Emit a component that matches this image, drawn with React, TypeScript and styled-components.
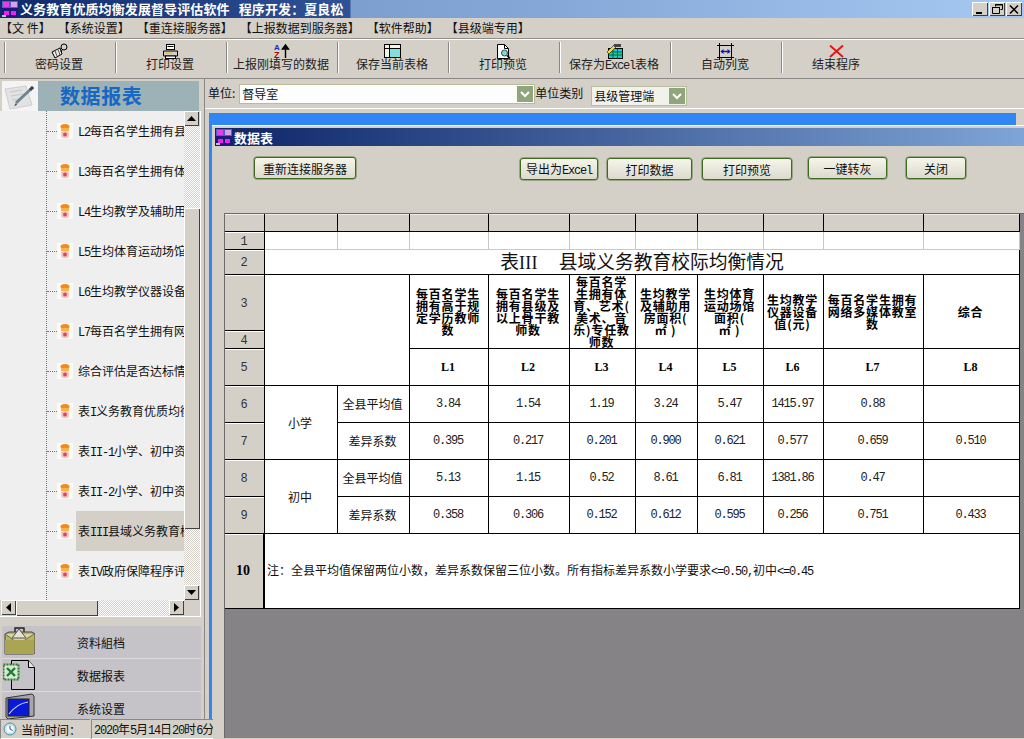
import React from "react";
import styled, { createGlobalStyle } from "styled-components";

const GlobalStyle = createGlobalStyle`
  html, body { margin: 0; padding: 0; background: #d4d0c8; }
  * { box-sizing: border-box; }
  body { font-family: "Noto Sans CJK SC", "Liberation Sans", sans-serif; font-size: 12px; color: #000; }
`;

const Page = styled.div`
  position: relative; width: 1024px; height: 739px; overflow: hidden;
  display: flex; flex-direction: column; background: #d4d0c8;
`;
const Latin = styled.span`
  font-family: "Liberation Mono", monospace; font-size: 12px; letter-spacing: -1.2px;
`;

/* title bar */
const TitleBar = styled.div`
  height: 18px; flex: none; display: flex; align-items: center; padding: 0 2px 0 2px;
  background: linear-gradient(90deg, #0f2a6c 0, #2f5296 350px, #7c9fd0 351px, #86a8d8 560px, #a6c9f2 100%);
`;
const TitleText = styled.span`
  margin-left: 2px; color: #fff; font-weight: 700; font-size: 13px; line-height: 18px; letter-spacing: 0.1px; white-space: pre;
`;
const WinControls = styled.div`
  margin-left: auto; display: flex; gap: 1px;
`;
const WinButton = styled.div`
  width: 16px; height: 14px; background: #d4d0c8; display: flex; align-items: center; justify-content: center;
  box-shadow: inset 1px 1px 0 #fff, inset -1px -1px 0 #404040;
`;

/* menu */
const MenuBar = styled.div`
  height: 20px; flex: none; display: flex; align-items: center; gap: 7px; line-height: 20px; white-space: pre;
`;
const MenuItem = styled.span`
  color: #111;
`;

/* toolbar */
const Toolbar = styled.div`
  height: 41px; flex: none; display: flex; padding: 3px 0 0 4px;
  border-top: 1px solid #8f8d88; box-shadow: inset 0 1px 0 #fff; border-bottom: 1px solid #8a8884;
`;
const ToolItem = styled.div`
  width: 111px; height: 31px; display: flex; flex-direction: column; align-items: center;
  border-left: 1px solid #8a8884; box-shadow: inset 1px 0 0 #fff; padding: 1px 2px 0 0;
`;
const ToolIcon = styled.svg`
  width: 17px; height: 17px; flex: none;
`;
const ToolLabel = styled.span`
  line-height: 14px; margin-top: -3px; color: #222; white-space: nowrap;
`;

/* main */
const Main = styled.div`
  flex: 1; min-height: 0; display: flex;
`;
const Sidebar = styled.div`
  width: 204px; flex: none; display: flex; flex-direction: column; padding-top: 2px;
`;
const SideHeader = styled.div`
  height: 30px; flex: none; margin: 0 5px 0 2px; background: #9db2b6; display: flex; align-items: center;
`;
const SideHeaderPic = styled.svg`
  width: 36px; height: 30px; flex: none;
`;
const SideHeaderText = styled.span`
  margin-left: 22px; color: #1668c4; font-weight: 700; font-size: 20px; letter-spacing: 0.6px; line-height: 30px;
`;
const TreeFrame = styled.div`
  width: 201px; height: 506px; flex: none; display: flex; flex-direction: column;
  border-right: 1px solid #fff; border-bottom: 1px solid #fff;
`;
const TreeTop = styled.div`
  flex: 1; min-height: 0; display: flex;
`;
const TreeBody = styled.div`
  width: 184px; flex: none; background: #efefef; overflow: hidden; padding-left: 46px;
`;
const TreeList = styled.div`
  height: 100%; border-left: 1px dotted #777;
`;
const TreeRow = styled.div`
  height: 40px; display: flex; align-items: center;
`;
const TreeDash = styled.div`
  width: 10px; flex: none; border-top: 1px dotted #777;
`;
const TreeIcon = styled.svg`
  width: 16px; height: 16px; flex: none;
`;
const TreeLabel = styled.div<{ $selected?: boolean }>`
  margin-left: 3px; width: 108px; flex: none; height: 40px; line-height: 40px; padding-left: 2px;
  white-space: nowrap; overflow: hidden; color: #111; background: ${(p) => (p.$selected ? "#d4d0c8" : "transparent")};
`;
const VScroll = styled.div`
  width: 16px; flex: none; display: flex; flex-direction: column;
`;
const HScroll = styled.div`
  height: 16px; flex: none; display: flex; background: #d4d0c8;
  padding-left: 1px;
`;
const ScrollButton = styled.div`
  width: 15px; height: 15px; flex: none; background: #d4d0c8; display: flex; align-items: center; justify-content: center;
  box-shadow: inset 1px 1px 0 #fff, inset -1px -1px 0 #404040;
`;
const ScrollTrack = styled.div<{ $size?: number }>`
  ${(p) => (p.$size ? `flex: 0 0 ${p.$size}px;` : "flex: 1;")}
  background: repeating-conic-gradient(#d4d0c8 0 25%, #fff 0 50%) 0 0 / 2px 2px;
`;
const ScrollThumb = styled.div<{ $size: number }>`
  flex: 0 0 ${(p) => p.$size}px; background: #d4d0c8;
  box-shadow: inset 1px 1px 0 #fff, inset -1px -1px 0 #404040;
`;
const ScrollCorner = styled.div`
  width: 16px; flex: none;
`;
const Nav = styled.div`
  height: 93px; flex: none; margin: 9px 3px 0 2px; background: #c5c3c7; overflow: hidden;
`;
const NavRow = styled.div`
  height: 33px; display: flex; align-items: center; border-bottom: 1px solid #dddbdc; overflow: hidden;
`;
const NavIcon = styled.svg`
  width: 32px; height: 32px; flex: none; margin-left: 1px;
`;
const NavText = styled.span`
  margin-left: 42px; color: #111;
`;
const Status = styled.div`
  position: absolute; left: 0; bottom: 0; width: 213px; height: 20px; background: #d4d0c8; display: flex; gap: 1px;
`;
const StatusPanel = styled.div<{ $width: number }>`
  width: ${(p) => p.$width}px; flex: none; display: flex; align-items: center; gap: 4px; padding-left: 2px;
  border-top: 1px solid #8a8884; border-left: 1px solid #8a8884; border-bottom: 1px solid #fff; white-space: nowrap; overflow: hidden; color: #111;
`;

/* right pane */
const RightPane = styled.div`
  flex: 1; min-width: 0; display: flex; flex-direction: column; border-left: 1px solid #8a8884;
`;
const UnitRow = styled.div`
  height: 30px; flex: none; display: flex; align-items: flex-start; padding: 5px 0 0 3px; border-bottom: 1px solid #fff; color: #111; line-height: 18px;
`;
const Combo = styled.div<{ $width: number; $bg: string; $left: number; $top: number }>`
  width: ${(p) => p.$width}px; height: 20px; flex: none; margin-left: ${(p) => p.$left}px; margin-top: ${(p) => p.$top}px;
  background: ${(p) => p.$bg}; border: 1px solid #b7bd9a; display: flex; align-items: center; padding: 0 0 0 2px; line-height: 18px; color: #111;
`;
const ComboArrow = styled.div`
  width: 16px; height: 16px; margin-left: auto; margin-right: 1px; background: #8fa67c; display: flex; align-items: center; justify-content: center;
`;
const Mdi = styled.div`
  flex: 1; min-height: 0; display: flex; flex-direction: column; padding: 4px 0 0 4px;
`;
const BlueTop = styled.div`
  height: 12px; width: 807px; flex: none; background: #2f86f4;
`;
const MdiBody = styled.div`
  flex: 1; min-height: 0; display: flex;
`;
const BlueSide = styled.div`
  width: 3px; flex: none; background: #2f86f4;
`;
const ChildWindow = styled.div`
  flex: 1; min-width: 0; display: flex; flex-direction: column; background: #d4d0c8; border-top: 1px solid #fff; padding-top: 2px;
`;
const ChildTitle = styled.div`
  height: 18px; flex: none; margin-left: 3px; display: flex; align-items: center; padding-left: 1px; gap: 2px;
  background: linear-gradient(90deg, #0c2568, #7fa4d6); color: #fff; font-weight: 700; font-size: 13px;
`;
const ButtonRow = styled.div`
  height: 67px; flex: none; display: flex; align-items: flex-start;
`;
const ActionButton = styled.div<{ $left: number; $top: number; $width: number }>`
  width: ${(p) => p.$width}px; height: 22px; flex: none; margin-left: ${(p) => p.$left}px; margin-top: ${(p) => p.$top}px;
  border: 1px solid #3f6a22; border-radius: 3px; background: linear-gradient(#f6f5ea, #dcdace);
  display: flex; align-items: center; justify-content: center; color: #111; white-space: nowrap;
  box-shadow: 0 0 0 0.5px #5a8038;
`;
const GridFrame = styled.div`
  flex: 1; min-height: 0; margin: 0 0 1px 12px; background: #858386; border-top: 1px solid #6c6a68; border-left: 1px solid #6c6a68; overflow: hidden;
`;
const Table = styled.table`
  width: 795px; table-layout: fixed; border-collapse: separate; border-spacing: 0; background: #fff;
`;
const Col = styled.col<{ $w: number }>`
  width: ${(p) => p.$w}px;
`;
const Row = styled.tr<{ $h: number }>`
  height: ${(p) => p.$h}px;
`;
const BaseCell = styled.td`
  padding: 0 2px 0 0; border-right: 1px solid #000; border-bottom: 1px solid #000; text-align: center; vertical-align: middle;
  background: #fff; color: #111; overflow: hidden; line-height: 14px;
`;
const TopCell = styled(BaseCell)`
  background: #d4d0c8; box-shadow: inset 0 1px 0 #efeee8;
`;
const RowHead = styled(BaseCell)<{ $big?: boolean }>`
  background: #d4d0c8; box-shadow: inset 0 1px 0 #fff; color: #333;
  ${(p) => (p.$big ? `font-family: "Liberation Serif", serif; font-weight: 700; font-size: 14px; color: #000; border-right-width: 2px;` : "")}
`;
const EmptyCell = styled(BaseCell)`
  border-right-color: #c8c8c8; border-bottom-color: #c8c8c8;
`;
const TitleCell = styled(BaseCell)`
  font-size: 18.75px; line-height: 20px; color: #111; white-space: pre; padding: 0;
`;
const TitleRoman = styled.span`
  font-family: "Liberation Serif", serif; font-size: 18px; letter-spacing: 0.3px;
`;
const HeaderCell = styled(BaseCell)`
  font-weight: 700; font-size: 12px; letter-spacing: 0.8px; line-height: 12px; color: #000;
`;
const CodeCell = styled(BaseCell)`
  font-family: "Liberation Serif", serif; font-weight: 700; font-size: 12px; color: #000;
`;
const NumCell = styled(BaseCell)`
  font-family: "Liberation Mono", monospace; font-size: 12px; letter-spacing: -1.2px; color: #222;
`;
const NoteCell = styled(BaseCell)`
  text-align: left; padding-left: 2px; white-space: nowrap; color: #111;
`;

/* icons */
const Logo = () => (
  <svg width="16" height="16" viewBox="0 0 16 16" style={{ flex: "none" }}>
    <rect width="16" height="16" fill="#1a1a7a" />
    <rect y="0" width="16" height="7" fill="#5a5ad0" />
    <rect x="1" y="1" width="6" height="5" fill="#e040e0" />
    <rect x="9" y="1" width="6" height="5" fill="#d8a0e8" />
    <rect x="2" y="10" width="5" height="4" fill="#f020f0" />
    <rect x="9" y="10" width="5" height="4" fill="#f020f0" />
    <rect x="0" y="14" width="4" height="2" fill="#c0c0c0" />
  </svg>
);
const TreeGlyph = () => (
  <TreeIcon viewBox="0 0 16 16">
    <rect width="16" height="16" fill="#fbfbf6" />
    <ellipse cx="8" cy="3.5" rx="4.5" ry="2.5" fill="#f28a1e" />
    <rect x="4" y="5" width="8" height="3" fill="#f7b44a" />
    <rect x="4" y="8" width="8" height="7" rx="2" fill="#f6c4c4" />
    <circle cx="8" cy="11.5" r="2" fill="#d84a5a" />
  </TreeIcon>
);
const KeyIcon = () => (
  <ToolIcon viewBox="0 0 17 17" fill="none">
    <path d="M1 9 L9 5 L11 11 L4 15 Z" fill="#e8e8e8" stroke="#000" />
    <path d="M4 8 L6 13 M7 6.5 L9 12" stroke="#555" />
    <circle cx="13" cy="4" r="3" fill="#d4d0c8" stroke="#000" />
    <path d="M11 7 L10 9" stroke="#000" />
  </ToolIcon>
);
const PrinterIcon = () => (
  <ToolIcon viewBox="0 0 17 17" fill="none">
    <rect x="4.5" y="1.5" width="8" height="5" fill="#fff" stroke="#000" />
    <path d="M5.5 3.5h6" stroke="#000" />
    <path d="M1.5 8 L15.5 8 L15.5 13 L1.5 13 Z" fill="#d4d0c8" stroke="#000" />
    <path d="M3 10h7" stroke="#d8c840" strokeWidth="1.5" />
    <rect x="3.5" y="13" width="10" height="2.5" fill="#fff" stroke="#000" />
  </ToolIcon>
);
const SortIcon = () => (
  <ToolIcon viewBox="0 0 17 17">
    <text x="1" y="7" fontSize="8" fontWeight="700" fontFamily="Liberation Sans, sans-serif" fill="#1a2ac0">A</text>
    <text x="1" y="15" fontSize="9" fontWeight="700" fontFamily="Liberation Sans, sans-serif" fill="#a01010">Z</text>
    <path d="M12.5 15V3M9.5 6l3-4 3 4z" stroke="#000" strokeWidth="1.4" fill="#000" />
  </ToolIcon>
);
const TableIcon = () => (
  <ToolIcon viewBox="0 0 17 17">
    <rect x="0.5" y="1.5" width="16" height="13" fill="#7fdede" stroke="#000" />
    <rect x="1" y="2" width="15" height="3" fill="#f4f2e0" />
    <rect x="1" y="2" width="4" height="12" fill="#f4f2e0" />
    <path d="M0.5 5.5h16M5.5 1.5v13" stroke="#000" />
  </ToolIcon>
);
const PreviewIcon = () => (
  <ToolIcon viewBox="0 0 17 17" fill="none">
    <path d="M2.5 1.5h7l4 4v10h-11z" fill="#fff" stroke="#000" />
    <path d="M9.5 1.5v4h4" stroke="#000" />
    <circle cx="9.5" cy="10" r="3" fill="#7fd8d8" stroke="#444" />
    <path d="M12 12.5l3 3" stroke="#000" strokeWidth="1.6" />
  </ToolIcon>
);
const ExcelIcon = () => (
  <ToolIcon viewBox="0 0 17 17" fill="none">
    <rect x="2.5" y="5.5" width="14" height="10" fill="#22c8c0" stroke="#000" />
    <path d="M2.5 9h14M2.5 12h14M7 5.5v10M11.5 5.5v10" stroke="#063" />
    <path d="M1 9L8 2l2 2-7 7z" fill="#f0e020" stroke="#333" strokeWidth="0.7" />
    <rect x="8" y="1" width="7" height="3" fill="#444" />
  </ToolIcon>
);
const AutoWidthIcon = () => (
  <ToolIcon viewBox="0 0 17 17" fill="none">
    <path d="M0 2.5h17M0 14.5h17M2.5 0v17M14.5 0v17" stroke="#000" />
    <path d="M4 8.5h9" stroke="#1018a8" strokeWidth="1.4" />
    <path d="M3.5 8.5l3-2.5v5zM13.5 8.5l-3-2.5v5z" fill="#1018a8" />
  </ToolIcon>
);
const ExitIcon = () => (
  <ToolIcon viewBox="0 0 17 17" fill="none">
    <path d="M2 2.5l13 11.5M15 2.5L2 14" stroke="#e01818" strokeWidth="2" />
  </ToolIcon>
);
const UpArrow = () => (
  <svg width="9" height="5" viewBox="0 0 9 5"><path d="M4.5 0L9 5H0z" fill="#000" /></svg>
);
const DownArrow = () => (
  <svg width="9" height="5" viewBox="0 0 9 5"><path d="M0 0h9L4.5 5z" fill="#000" /></svg>
);
const LeftArrow = () => (
  <svg width="5" height="9" viewBox="0 0 5 9"><path d="M5 0v9L0 4.5z" fill="#000" /></svg>
);
const RightArrow = () => (
  <svg width="5" height="9" viewBox="0 0 5 9"><path d="M0 0v9l5-4.5z" fill="#000" /></svg>
);
const Chevron = () => (
  <svg width="10" height="7" viewBox="0 0 10 7" fill="none"><path d="M1 1l4 4 4-4" stroke="#fff" strokeWidth="2" /></svg>
);
const PenPicture = () => (
  <SideHeaderPic viewBox="0 0 36 30">
    <rect width="36" height="30" fill="#f4f4f4" />
    <path d="M3 8L24 5 30 24 8 28z" fill="#e2e2e2" stroke="#cfcfcf" />
    <path d="M8 11l12-2M9 15l12-2M10 19l8-1" stroke="#c8c8c8" />
    <path d="M14 22L31 6" stroke="#6b8494" strokeWidth="3" />
    <path d="M14 22l-2 3 3-1z" fill="#444" />
    <path d="M28 9l3-3" stroke="#444" strokeWidth="3" />
  </SideHeaderPic>
);
const Briefcase = () => (
  <NavIcon viewBox="0 0 32 32">
    <path d="M12 6V2h9v4" fill="none" stroke="#222" strokeWidth="1.4" />
    <path d="M2 8L6 6h23l3 2v19l-2 1H2z" fill="#b9b45e" stroke="#444" />
    <path d="M2 8l14 10L31 8" fill="#d8d4a0" stroke="#666" />
    <path d="M16 3L9 12h14z" fill="#e4e2d8" stroke="#555" />
    <rect x="2" y="14" width="29" height="14" fill="#a9a552" />
  </NavIcon>
);
const ExcelDoc = () => (
  <NavIcon viewBox="0 0 32 32">
    <path d="M8.5 1.5h17l6 7v22h-23z" fill="#c5c3c7" stroke="#000" />
    <path d="M25.5 1.5v7h6" fill="#e8e8e8" stroke="#000" />
    <rect x="0.5" y="5.5" width="15" height="15" fill="#d8e8d4" stroke="#2a7a2a" strokeWidth="2" strokeDasharray="2 1" />
    <path d="M4 9l8 8M12 9l-8 8" stroke="#1e7a34" strokeWidth="2.4" />
  </NavIcon>
);
const MonitorIcon = () => (
  <NavIcon viewBox="0 0 32 32">
    <path d="M3 6l26-4 2 2v20l-26 3-2-2z" fill="#a8a6aa" stroke="#333" />
    <rect x="5" y="7" width="21" height="17" fill="#0a18d8" stroke="#222" />
    <path d="M6 22C12 14 18 11 25 10" stroke="#cfd8f0" strokeWidth="1.2" fill="none" />
    <path d="M9 29h14" stroke="#333" strokeWidth="2" />
  </NavIcon>
);
const ClockIcon = () => (
  <svg width="14" height="14" viewBox="0 0 14 14" style={{ flex: "none" }}>
    <circle cx="7" cy="7" r="6" fill="#bfe4ee" stroke="#5a8aa8" />
    <circle cx="7" cy="7" r="3.6" fill="#fff" />
    <path d="M7 7V3.8M7 7l2.6 1.6" stroke="#244a78" fill="none" />
  </svg>
);

const tools: [React.ComponentType, React.ReactNode][] = [
  [KeyIcon, "密码设置"],
  [PrinterIcon, "打印设置"],
  [SortIcon, "上报刚填写的数据"],
  [TableIcon, "保存当前表格"],
  [PreviewIcon, "打印预览"],
  [ExcelIcon, <>保存为<Latin>Excel</Latin>表格</>],
  [AutoWidthIcon, "自动列宽"],
  [ExitIcon, "结束程序"],
];

const treeItems: React.ReactNode[] = [
  <><Latin>L2</Latin>每百名学生拥有县级及以上</>,
  <><Latin>L3</Latin>每百名学生拥有体育、艺术</>,
  <><Latin>L4</Latin>生均教学及辅助用房面积</>,
  <><Latin>L5</Latin>生均体育运动场馆面积</>,
  <><Latin>L6</Latin>生均教学仪器设备值</>,
  <><Latin>L7</Latin>每百名学生拥有网络多媒体</>,
  "综合评估是否达标情况",
  <>表<Latin>I</Latin>义务教育优质均衡发展</>,
  <>表<Latin>II-1</Latin>小学、初中资源配置</>,
  <>表<Latin>II-2</Latin>小学、初中资源配置</>,
  <>表<Latin>III</Latin>县域义务教育校际均衡</>,
  <>表<Latin>IV</Latin>政府保障程序评估</>,
];

const colWidths = [40, 73, 72, 79, 81, 66, 62, 66, 60, 100, 96];

const headers: string[][] = [
  ["每百名学生", "拥有高于规", "定学历教师", "数"],
  ["每百名学生", "拥有县级及", "以上骨干教", "师数"],
  ["每百名学", "生拥有体", "育、艺术(", "美术、音", "乐)专任教", "师数"],
  ["生均教学", "及辅助用", "房面积(", "㎡ )"],
  ["生均体育", "运动场馆", "面积(", "㎡ )"],
  ["生均教学", "仪器设备", "值(元)"],
  ["每百名学生拥有", "网络多媒体教室", "数"],
  ["综合"],
];

const dataRows: { n: string; group?: string; label: string; values: string[]; h: number }[] = [
  { n: "6", group: "小学", label: "全县平均值", values: ["3.84", "1.54", "1.19", "3.24", "5.47", "1415.97", "0.88", ""], h: 37 },
  { n: "7", label: "差异系数", values: ["0.395", "0.217", "0.201", "0.900", "0.621", "0.577", "0.659", "0.510"], h: 37 },
  { n: "8", group: "初中", label: "全县平均值", values: ["5.13", "1.15", "0.52", "8.61", "6.81", "1381.86", "0.47", ""], h: 37 },
  { n: "9", label: "差异系数", values: ["0.358", "0.306", "0.152", "0.612", "0.595", "0.256", "0.751", "0.433"], h: 37 },
];

export default function App() {
  return (
    <Page>
      <GlobalStyle />
      <TitleBar>
        <Logo />
        <TitleText>义务教育优质均衡发展督导评估软件   程序开发：夏良松</TitleText>
        <WinControls>
          <WinButton>
            <svg width="10" height="10" viewBox="0 0 10 10"><path d="M1 8h6v2H1z" fill="#000" /></svg>
          </WinButton>
          <WinButton>
            <svg width="11" height="10" viewBox="0 0 11 10" fill="none"><path d="M3.5 2.5v-2h7v5h-2M.5 3.5h7v6h-7z" stroke="#000" /><path d="M0 3.5h8M3 1h8" stroke="#000" /></svg>
          </WinButton>
          <WinButton>
            <svg width="10" height="9" viewBox="0 0 10 9" fill="none"><path d="M1 .5l8 8M9 .5l-8 8" stroke="#000" strokeWidth="1.5" /></svg>
          </WinButton>
        </WinControls>
      </TitleBar>

      <MenuBar>
        <MenuItem>【文 件】</MenuItem>
        <MenuItem>【系统设置】</MenuItem>
        <MenuItem>【重连接服务器】</MenuItem>
        <MenuItem>【上报数据到服务器】</MenuItem>
        <MenuItem>【软件帮助】</MenuItem>
        <MenuItem>【县级端专用】</MenuItem>
      </MenuBar>

      <Toolbar>
        {tools.map(([Icon, label], i) => (
          <ToolItem key={i}>
            <Icon />
            <ToolLabel>{label}</ToolLabel>
          </ToolItem>
        ))}
      </Toolbar>

      <Main>
        <Sidebar>
          <SideHeader>
            <PenPicture />
            <SideHeaderText>数据报表</SideHeaderText>
          </SideHeader>
          <TreeFrame>
            <TreeTop>
              <TreeBody>
                <TreeList>
                  {treeItems.map((item, i) => (
                    <TreeRow key={i}>
                      <TreeDash />
                      <TreeGlyph />
                      <TreeLabel $selected={i === 10}>{item}</TreeLabel>
                    </TreeRow>
                  ))}
                </TreeList>
              </TreeBody>
              <VScroll>
                <ScrollButton><UpArrow /></ScrollButton>
                <ScrollTrack $size={82} />
                <ScrollThumb $size={321} />
                <ScrollTrack />
                <ScrollButton><DownArrow /></ScrollButton>
              </VScroll>
            </TreeTop>
            <HScroll>
              <ScrollButton><LeftArrow /></ScrollButton>
              <ScrollThumb $size={82} />
              <ScrollTrack />
              <ScrollButton><RightArrow /></ScrollButton>
              <ScrollCorner />
            </HScroll>
          </TreeFrame>
          <Nav>
            <NavRow><Briefcase /><NavText>资料組档</NavText></NavRow>
            <NavRow><ExcelDoc /><NavText>数据报表</NavText></NavRow>
            <NavRow><MonitorIcon /><NavText>系统设置</NavText></NavRow>
          </Nav>
        </Sidebar>

        <RightPane>
          <UnitRow>
            单位:
            <Combo $width={296} $bg="#fdfdfd" $left={4} $top={0}>
              督导室
              <ComboArrow><Chevron /></ComboArrow>
            </Combo>
            单位类别
            <Combo $width={96} $bg="#f2f2ec" $left={8} $top={2}>
              县级管理端
              <ComboArrow><Chevron /></ComboArrow>
            </Combo>
          </UnitRow>
          <Mdi>
            <BlueTop />
            <MdiBody>
              <BlueSide />
              <ChildWindow>
                <ChildTitle><Logo />数据表</ChildTitle>
                <ButtonRow>
                  <ActionButton $left={42} $top={11} $width={102}>重新连接服务器</ActionButton>
                  <ActionButton $left={164} $top={12} $width={78}><span>导出为<Latin>Excel</Latin></span></ActionButton>
                  <ActionButton $left={9} $top={12} $width={85}>打印数据</ActionButton>
                  <ActionButton $left={10} $top={12} $width={90}>打印预览</ActionButton>
                  <ActionButton $left={16} $top={11} $width={79}>一键转灰</ActionButton>
                  <ActionButton $left={19} $top={11} $width={60}>关闭</ActionButton>
                </ButtonRow>
                <GridFrame>
                  <Table>
                    <colgroup>
                      {colWidths.map((w, i) => <Col key={i} $w={w} />)}
                    </colgroup>
                    <tbody>
                      <Row $h={18}>
                        {colWidths.map((_, i) => <TopCell key={i} />)}
                      </Row>
                      <Row $h={18}>
                        <RowHead><Latin>1</Latin></RowHead>
                        {colWidths.slice(1).map((_, i) => <EmptyCell key={i} />)}
                      </Row>
                      <Row $h={25}>
                        <RowHead><Latin>2</Latin></RowHead>
                        <TitleCell colSpan={10}>表<TitleRoman>III</TitleRoman>     县域义务教育校际均衡情况</TitleCell>
                      </Row>
                      <Row $h={56}>
                        <RowHead><Latin>3</Latin></RowHead>
                        <BaseCell colSpan={2} rowSpan={3} />
                        {headers.map((lines, i) => (
                          <HeaderCell key={i} rowSpan={2}>
                            {lines.map((l, j) => <div key={j}>{l}</div>)}
                          </HeaderCell>
                        ))}
                      </Row>
                      <Row $h={18}>
                        <RowHead><Latin>4</Latin></RowHead>
                      </Row>
                      <Row $h={37}>
                        <RowHead><Latin>5</Latin></RowHead>
                        {["L1", "L2", "L3", "L4", "L5", "L6", "L7", "L8"].map((c) => <CodeCell key={c}>{c}</CodeCell>)}
                      </Row>
                      {dataRows.map((r) => (
                        <Row key={r.n} $h={r.h}>
                          <RowHead><Latin>{r.n}</Latin></RowHead>
                          {r.group && <BaseCell rowSpan={2}>{r.group}</BaseCell>}
                          <BaseCell>{r.label}</BaseCell>
                          {r.values.map((v, i) => <NumCell key={i}>{v}</NumCell>)}
                        </Row>
                      ))}
                      <Row $h={75}>
                        <RowHead $big>10</RowHead>
                        <NoteCell colSpan={10}>
                          注：全县平均值保留两位小数，差异系数保留三位小数。所有指标差异系数小学要求<Latin>&lt;=0.50,</Latin>初中<Latin>&lt;=0.45</Latin>
                        </NoteCell>
                      </Row>
                    </tbody>
                  </Table>
                </GridFrame>
              </ChildWindow>
            </MdiBody>
          </Mdi>
        </RightPane>
      </Main>

      <Status>
        <StatusPanel $width={90}><ClockIcon />当前时间：</StatusPanel>
        <StatusPanel $width={122}><span><Latin>2020</Latin>年<Latin>5</Latin>月<Latin>14</Latin>日<Latin>20</Latin>时<Latin>6</Latin>分</span></StatusPanel>
      </Status>
    </Page>
  );
}
